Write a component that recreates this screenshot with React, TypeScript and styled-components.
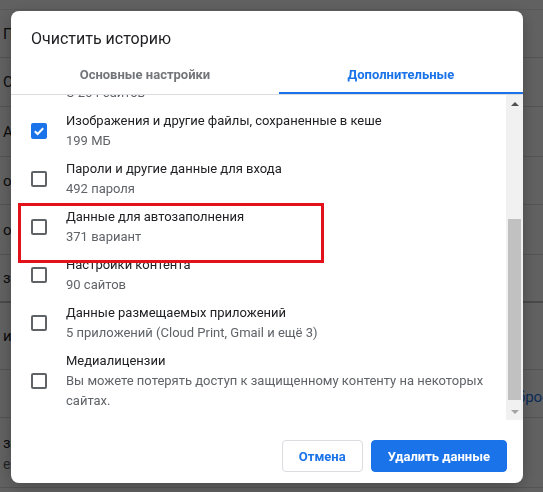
import React from 'react'
import styled, { createGlobalStyle, css } from 'styled-components'

const GlobalStyle = createGlobalStyle`
    html, body {
        margin: 0;
        padding: 0;
        width: 100%;
        height: 100%;
        overflow: hidden;
        background: #ffffff;
        font-family: Roboto, "Noto Sans", "Liberation Sans", sans-serif;
    }
    * {
        box-sizing: border-box;
    }
`

// rows of the settings page that sits behind the dialog
const pageRows = [
    { height: 48, text: 'Пароли' },
    { height: 49, text: 'Способы оплаты' },
    { height: 50, text: 'Адреса и другие данные' },
    { height: 48, text: 'отправлять запрос' },
    { height: 50, text: 'олнение форм' },
    { height: 48, text: 'запрашивать разрешение', strong: true },
    { height: 67, text: 'и, доступ к данным' },
    { height: 48, text: '', link: 'Сбросить' },
    { height: 70, text: 'затели', sub: 'енее' },
]

const items = [
    { title: 'Файлы cookie и другие данные сайтов', sub: ['С 264 сайтов'], checked: true },
    { title: 'Изображения и другие файлы, сохраненные в кеше', sub: ['199 МБ'], checked: true },
    { title: 'Пароли и другие данные для входа', sub: ['492 пароля'] },
    { title: 'Данные для автозаполнения', sub: ['371 вариант'], highlighted: true },
    { title: 'Настройки контента', sub: ['90 сайтов'] },
    { title: 'Данные размещаемых приложений', sub: ['5 приложений (Cloud Print, Gmail и ещё 3)'] },
    {
        title: 'Медиалицензии',
        sub: ['Вы можете потерять доступ к защищенному контенту на некоторых', 'сайтах.'],
    },
]

const App = () => {
    return (
        <>
            <GlobalStyle />
            <Page>
                <PageTop />
                {pageRows.map((row, i) => (
                    <PageRow key={i} $height={row.height} $strong={row.strong}>
                        <PageText>
                            {row.text}
                            {row.sub && <PageSub>{row.sub}</PageSub>}
                        </PageText>
                        {row.link && <PageLink>{row.link}</PageLink>}
                    </PageRow>
                ))}
            </Page>

            <Backdrop>
                <Dialog>
                    <Title>Очистить историю</Title>
                    <Tabs>
                        <Tab>Основные настройки</Tab>
                        <Tab $active>Дополнительные</Tab>
                    </Tabs>

                    <ScrollArea>
                        <Viewport>
                            <List $offset={36}>
                                {items.map((item) => (
                                    <Item key={item.title} $highlighted={item.highlighted}>
                                        <Checkbox $checked={item.checked}>
                                            {item.checked && (
                                                <svg width="12" height="12" viewBox="0 0 12 12">
                                                    <polyline
                                                        points="1.8,6.2 4.6,9 10.2,3.2"
                                                        fill="none"
                                                        stroke="#ffffff"
                                                        strokeWidth="2"
                                                    />
                                                </svg>
                                            )}
                                        </Checkbox>
                                        <ItemText>
                                            <ItemTitle>{item.title}</ItemTitle>
                                            {item.sub.map((line) => (
                                                <ItemSub key={line}>{line}</ItemSub>
                                            ))}
                                        </ItemText>
                                    </Item>
                                ))}
                            </List>
                        </Viewport>

                        <Scrollbar>
                            <ScrollButton>
                                <Arrow $dir="up" />
                            </ScrollButton>
                            <Track>
                                <Thumb />
                            </Track>
                            <ScrollButton>
                                <Arrow $dir="down" />
                            </ScrollButton>
                        </Scrollbar>
                    </ScrollArea>

                    <Footer>
                        <Button>Отмена</Button>
                        <Button $primary>Удалить данные</Button>
                    </Footer>
                </Dialog>
            </Backdrop>
        </>
    )
}

export default App

const Page = styled.div`
    display: flex;
    flex-direction: column;
    height: 100vh;
    overflow: hidden;
    background: #ffffff;
`

const PageTop = styled.div`
    flex-shrink: 0;
    height: 10px;
    border-bottom: 1px solid #e8eaed;
`

const PageRow = styled.div<{ $height: number; $strong?: boolean }>`
    display: flex;
    align-items: center;
    justify-content: space-between;
    flex-shrink: 0;
    height: ${(p) => p.$height}px;
    padding: 0 0 0 3px;
    border-bottom: 1px solid #dadce0;
    ${(p) =>
        p.$strong &&
        css`
            border-bottom: 2px solid #bdc1c6;
        `}
`

const PageText = styled.div`
    display: flex;
    flex-direction: column;
    gap: 4px;
    font-size: 15px;
    color: #202124;
`

const PageSub = styled.span`
    font-size: 14px;
    color: #5f6368;
`

const PageLink = styled.span`
    flex-shrink: 0;
    margin-top: 6px;
    margin-right: -31px;
    font-size: 15px;
    color: #1a73e8;
`

const Backdrop = styled.div`
    position: fixed;
    inset: 0;
    display: flex;
    align-items: flex-start;
    padding: 11px 0 0 11px;
    background: rgba(0, 0, 0, 0.62);
`

const Dialog = styled.div`
    display: flex;
    flex-direction: column;
    width: 512px;
    height: 472px;
    background: #ffffff;
    border-radius: 8px;
    overflow: hidden;
    box-shadow: 0 4px 16px rgba(0, 0, 0, 0.25);
`

const Title = styled.h2`
    margin: 0;
    padding: 16px 20px 0 20px;
    font-size: 16px;
    line-height: 24px;
    font-weight: 400;
    color: #202124;
`

const Tabs = styled.div`
    display: flex;
    margin-top: 5px;
    border-bottom: 1px solid #dadce0;
`

const Tab = styled.div<{ $active?: boolean }>`
    flex: 1 1 auto;
    display: flex;
    align-items: center;
    justify-content: center;
    height: 38px;
    padding-bottom: 1px;
    font-size: 13px;
    font-weight: 700;
    color: #72767a;
    ${(p) =>
        p.$active &&
        css`
            color: #1a73e8;
            box-shadow: inset 0 -2px 0 #1a73e8;
        `}
`

const ScrollArea = styled.div`
    display: flex;
    height: 325px;
`

const Viewport = styled.div`
    flex: 1;
    overflow: hidden;
`

const List = styled.div<{ $offset: number }>`
    display: flex;
    flex-direction: column;
    margin-top: ${(p) => -p.$offset}px;
`

const Item = styled.div<{ $highlighted?: boolean }>`
    position: relative;
    display: flex;
    align-items: center;
    gap: 19px;
    padding: 4px 20px;
    ${(p) =>
        p.$highlighted &&
        css`
            &::after {
                content: '';
                position: absolute;
                left: 7px;
                top: 0;
                width: 300px;
                height: 54px;
                border: 3px solid #e2111a;
                z-index: 2;
            }
        `}
`

const Checkbox = styled.div<{ $checked?: boolean }>`
    flex-shrink: 0;
    display: flex;
    align-items: center;
    justify-content: center;
    width: 16px;
    height: 16px;
    border: 2px solid #5f6368;
    border-radius: 2px;
    ${(p) =>
        p.$checked &&
        css`
            background: #1a73e8;
            border-color: #1a73e8;
        `}
`

const ItemText = styled.div`
    display: flex;
    flex-direction: column;
`

const ItemTitle = styled.div`
    font-size: 13px;
    line-height: 20px;
    color: #202124;
`

const ItemSub = styled.div`
    font-size: 13px;
    line-height: 20px;
    color: #5f6368;
`

const Scrollbar = styled.div`
    display: flex;
    flex-direction: column;
    width: 17px;
    background: #f1f1f1;
`

const ScrollButton = styled.div`
    display: flex;
    align-items: center;
    justify-content: center;
    height: 17px;
`

const Arrow = styled.div<{ $dir: 'up' | 'down' }>`
    width: 0;
    height: 0;
    border-left: 4px solid transparent;
    border-right: 4px solid transparent;
    ${(p) =>
        p.$dir === 'up'
            ? css`
                  border-bottom: 4px solid #505050;
              `
            : css`
                  border-top: 4px solid #a3a3a3;
              `}
`

const Track = styled.div`
    flex: 1;
    display: flex;
    flex-direction: column;
    padding: 107px 2px 3px 2px;
`

const Thumb = styled.div`
    flex: 1;
    background: #c1c1c1;
`

const Footer = styled.div`
    display: flex;
    justify-content: flex-end;
    gap: 8px;
    padding: 20px 16px 0 16px;
`

const Button = styled.button<{ $primary?: boolean }>`
    height: 32px;
    padding: 0 16px;
    border: 1px solid #dadce0;
    border-radius: 4px;
    background: #ffffff;
    font-family: inherit;
    font-size: 13px;
    font-weight: 700;
    color: #1a73e8;
    ${(p) =>
        p.$primary &&
        css`
            background: #1a73e8;
            border-color: #1a73e8;
            color: #ffffff;
        `}
`
